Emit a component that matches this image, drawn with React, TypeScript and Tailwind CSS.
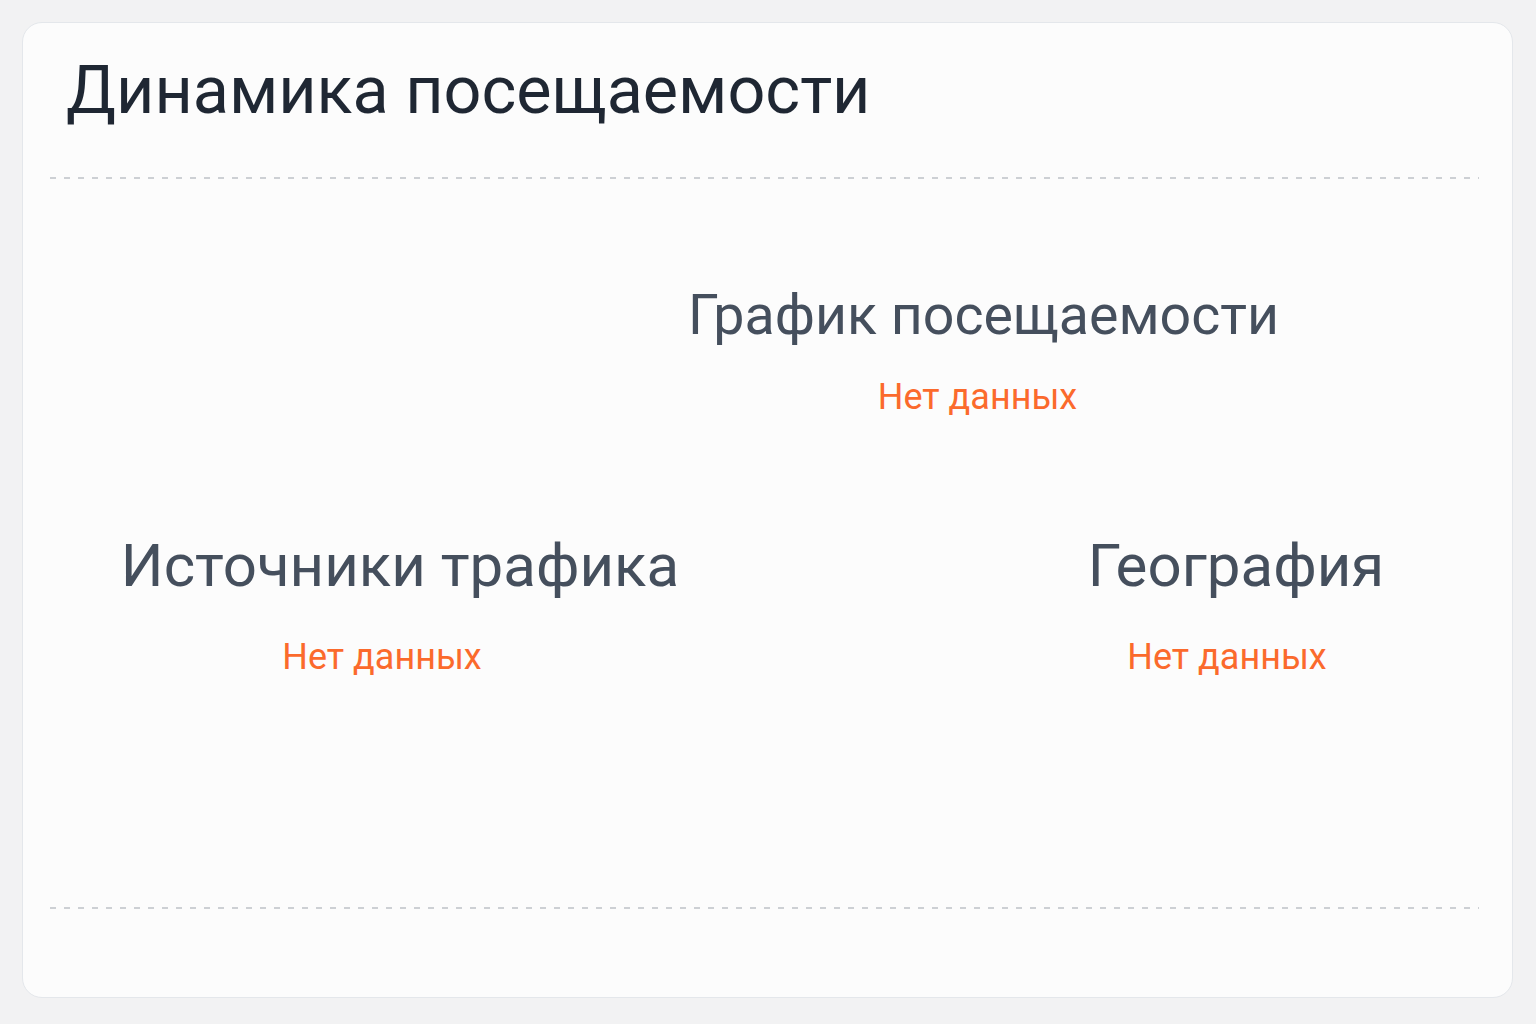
const Dashed = () => (
  <div className="mr-[6px] h-[2px] bg-[repeating-linear-gradient(90deg,#cdd0d4_0_6px,transparent_6px_14px)]" />
);

interface EmptyWidgetProps {
  title: string;
  titleClassName: string;
  noteClassName: string;
}

const EmptyWidget = ({ title, titleClassName, noteClassName }: EmptyWidgetProps) => (
  <div className="flex flex-col items-center">
    <h3 className={`leading-none font-normal text-[#454f5d] ${titleClassName}`}>
      {title}
    </h3>
    <p className={`text-[36px] leading-none text-[#fb6a2c] ${noteClassName}`}>
      Нет данных
    </p>
  </div>
);

const App = () => {
  return (
    <div
      className="min-h-screen bg-[#f2f2f3] p-[22px]"
      style={{ fontFamily: "Roboto, 'Noto Sans', sans-serif" }}
    >
      <section className="h-[976px] w-[1491px] rounded-[20px] border border-[#e4e7eb] bg-[#fcfcfc] px-[27px]">
        <h1 className="pl-[16px] pt-[34px] text-[66.5px] leading-none font-normal text-[#1f2733]">
          Динамика посещаемости
        </h1>
        <div className="mt-[53px]">
          <Dashed />
        </div>
        <div className="flex h-[728px] flex-col">
          <div className="flex justify-center pl-[432px] pt-[109px]">
            <EmptyWidget
              title="График посещаемости"
              titleClassName="text-[55.5px]"
              noteClassName="mt-[36px] mr-[12px]"
            />
          </div>
          <div className="mt-[121px] flex">
            <div className="flex w-[700px] justify-center">
              <EmptyWidget
                title="Источники трафика"
                titleClassName="text-[60px]"
                noteClassName="mt-[43px] mr-[36px]"
              />
            </div>
            <div className="flex flex-1 justify-center pl-[237px]">
              <EmptyWidget
                title="География"
                titleClassName="text-[60px]"
                noteClassName="mt-[43px] mr-[18px]"
              />
            </div>
          </div>
        </div>
        <Dashed />
      </section>
    </div>
  );
};

export default App;
